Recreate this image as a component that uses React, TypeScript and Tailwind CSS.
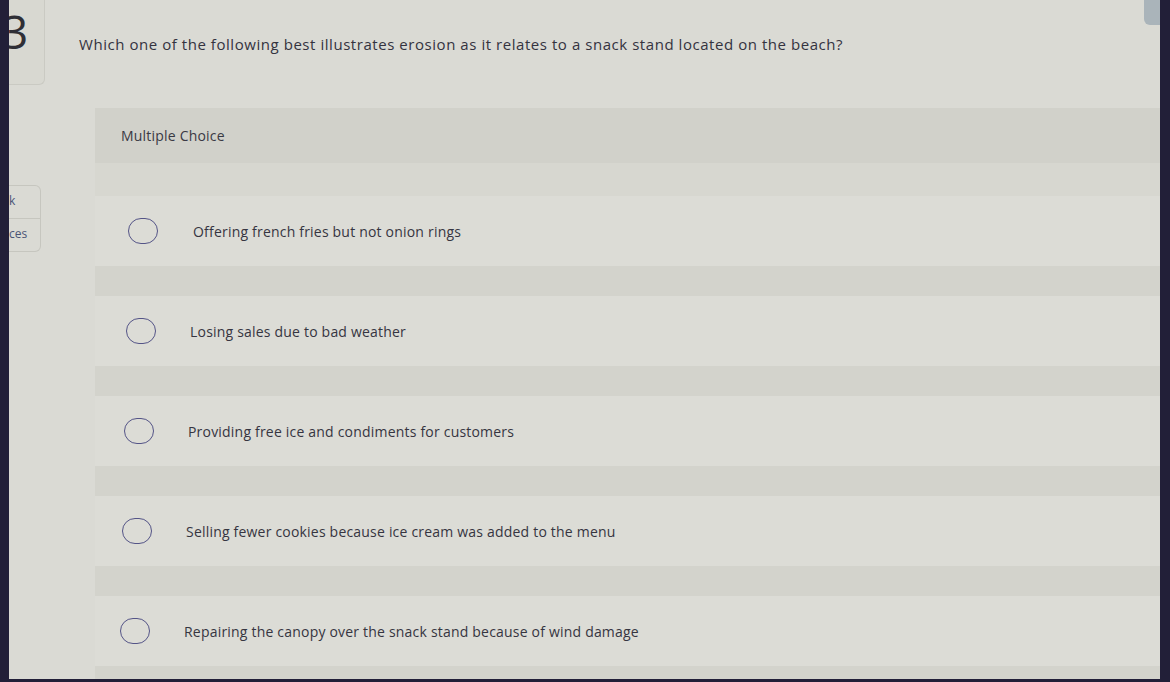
const options = [
  { text: "Offering french fries but not onion rings", pad: "pl-[33px]", gap: "gap-[35px]" },
  { text: "Losing sales due to bad weather", pad: "pl-[31px]", gap: "gap-[34px]" },
  { text: "Providing free ice and condiments for customers", pad: "pl-[29px]", gap: "gap-[34px]" },
  { text: "Selling fewer cookies because ice cream was added to the menu", pad: "pl-[27px]", gap: "gap-[34px]" },
  { text: "Repairing the canopy over the snack stand because of wind damage", pad: "pl-[25px]", gap: "gap-[34px]" },
];

export default function App() {
  return (
    <div
      className="flex h-[682px] w-[1170px] overflow-hidden bg-[#221f38] text-[#3b3a44]"
      style={{ fontFamily: '"Open Sans", "Liberation Sans", Arial, sans-serif' }}
    >
      <div className="mb-[3px] ml-[9px] mr-[10px] flex flex-1 overflow-hidden bg-[#dadad4]">
        {/* left rail */}
        <aside className="flex w-[36px] shrink-0 flex-col">
          <div className="h-[85px] overflow-hidden rounded-br-md border-b border-r border-[#cacac3] bg-[#d8d8d1]">
            <div className="-ml-[7px] mt-[8px] text-[46px] leading-none text-[#2f2f36]">3</div>
          </div>
          <nav className="mt-[100px] flex w-[32px] flex-col rounded-r-md border border-l-0 border-[#c6c6bf] text-[12px] text-[#4a5576]">
            <div className="h-[33px] border-b border-[#c6c6bf] pt-[9px] leading-none">k</div>
            <div className="h-[32px] pt-[9px] leading-none">ces</div>
          </nav>
        </aside>

        {/* main */}
        <main className="flex min-w-0 flex-1 flex-col">
          <div className="flex items-start justify-between">
            <p className="pl-[34px] pt-[34px] text-[15px] leading-[20px] tracking-[0.55px] text-[#34333f]">
              Which one of the following best illustrates erosion as it relates to a snack stand located on the beach?
            </p>
            <div className="h-[25px] w-[16px] rounded-bl-md bg-[#aab4ba]" />
          </div>

          <section className="ml-[50px] mt-[54px] flex flex-col">
            <div className="flex h-[55px] items-center bg-[#d1d1ca] pl-[26px] text-[14px] tracking-[0.2px] text-[#3a3944]">
              Multiple Choice
            </div>
            <div className="h-[33px] bg-[#d7d7d0]" />
            {options.map((o) => (
              <div key={o.text} className="flex flex-col">
                <div className={`flex h-[70px] items-center bg-[#dcdcd6] ${o.pad} ${o.gap}`}>
                  <span className="h-[26px] w-[30px] shrink-0 rounded-full border-[1.5px] border-[#545487]" />
                  <span className="text-[14px] tracking-[0.2px] text-[#363541]">{o.text}</span>
                </div>
                <div className="h-[30px] bg-[#d3d3cc]" />
              </div>
            ))}
          </section>
        </main>
      </div>
    </div>
  );
}
